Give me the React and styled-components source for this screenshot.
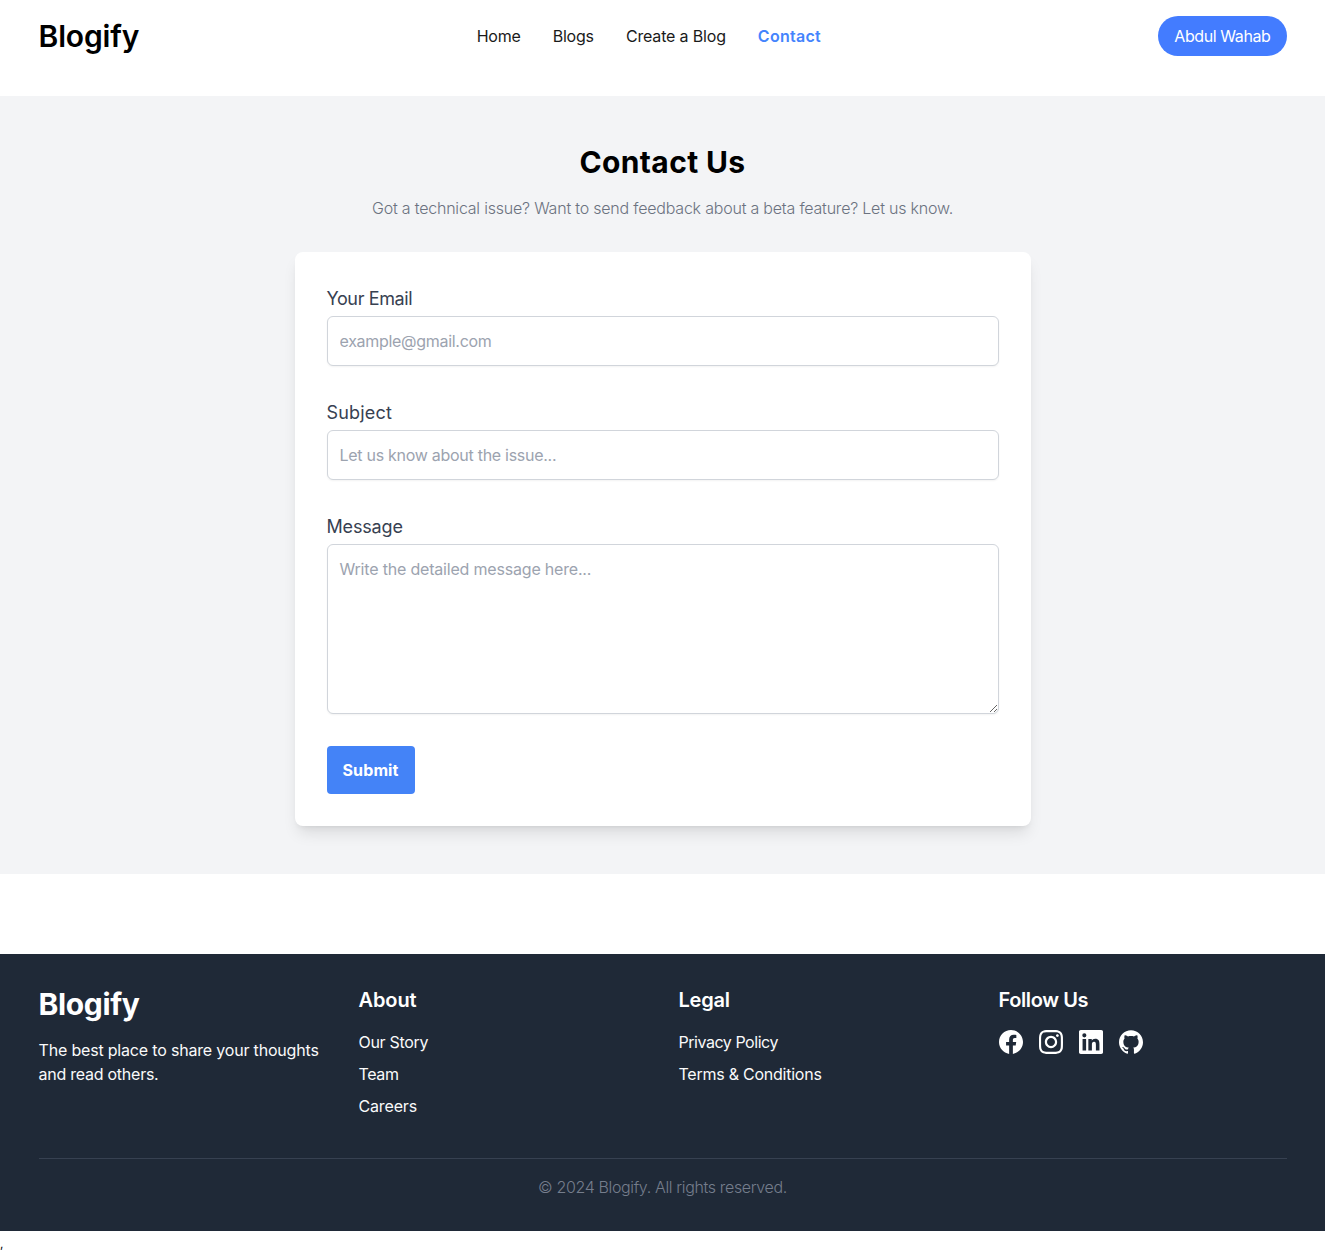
import React from "react";
import styled, { createGlobalStyle, css } from "styled-components";

const GlobalStyle = createGlobalStyle`
  *, *::before, *::after { box-sizing: border-box; }
  body {
    margin: 0;
    background: #fff;
    color: #000;
    font: 400 16px/24px Inter, "Liberation Sans", sans-serif;
  }
  h1, h2, h3, p, ul { margin: 0; padding: 0; }
  ul { list-style: none; }
  a { color: inherit; text-decoration: none; }
`;

const tracking = css`
  letter-spacing: ${({ $track = 0 }) => $track}px;
`;

const Container = styled.div`
  max-width: 1280px;
  margin: 0 auto;
  padding: 0 16px;
`;

const Header = styled.header`
  height: 96px;
  padding-top: 16px;
`;

const HeaderBar = styled(Container)`
  display: flex;
  align-items: center;
  justify-content: space-between;
`;

const Logo = styled.a`
  display: block;
  font-size: 30px;
  line-height: 36px;
  font-weight: ${({ $bold }) => ($bold ? 700 : 600)};
  white-space: nowrap;
  ${tracking}
`;

const Nav = styled.nav`
  display: flex;
  gap: 32px;
`;

const NavLink = styled.a`
  white-space: nowrap;
  color: ${({ $active }) => ($active ? "#4484fd" : "#1a1a1a")};
  font-weight: ${({ $active }) => ($active ? 600 : 400)};
  ${tracking}
`;

const UserButton = styled.button`
  height: 40px;
  padding: 8px 16px;
  border: 0;
  border-radius: 20px;
  background: #437cff;
  color: #fff;
  font: inherit;
  white-space: nowrap;
  ${tracking}
`;

const ContactSection = styled.section`
  padding: 48px 0;
  background: #f3f4f6;
`;

const Title = styled.h1`
  margin-bottom: 16px;
  text-align: center;
  font-size: 30px;
  line-height: 36px;
  font-weight: 700;
  ${tracking}
`;

const Subtitle = styled.p`
  margin-bottom: 32px;
  text-align: center;
  font-weight: 300;
  color: #6b7280;
  ${tracking}
`;

const FormCard = styled.form`
  display: flex;
  flex-direction: column;
  align-items: flex-start;
  gap: 32px;
  width: 736px;
  margin: 0 auto;
  padding: 32px;
  border-radius: 8px;
  background: #fff;
  box-shadow: 0 10px 15px -3px rgba(0, 0, 0, 0.1), 0 4px 6px -4px rgba(0, 0, 0, 0.1);
`;

const Field = styled.div`
  display: flex;
  flex-direction: column;
  gap: 4px;
  width: 100%;
`;

const Label = styled.label`
  padding-top: 2px;
  font-size: 18px;
  line-height: 26px;
  color: #374151;
  ${tracking}
`;

const control = css`
  display: block;
  width: 100%;
  padding: 12px;
  border: 1px solid #d1d5db;
  border-radius: 6px;
  background: #fff;
  box-shadow: 0 1px 2px rgba(0, 0, 0, 0.05);
  font: inherit;
  outline: none;
  ${tracking}
  &::placeholder { color: #9ca3af; opacity: 1; }
`;

const Input = styled.input`
  ${control}
  height: 50px;
`;

const TextArea = styled.textarea`
  ${control}
  height: 170px;
  resize: vertical;
`;

const SubmitButton = styled.button`
  height: 48px;
  padding: 12px 16px;
  border: 0;
  border-radius: 4px;
  background: #4483f7;
  color: #fff;
  font: inherit;
  font-weight: 700;
  ${tracking}
`;

const Footer = styled.footer`
  margin-top: 80px;
  padding: 32px 0;
  background: #1f2937;
  color: #fff;
`;

const FooterGrid = styled.div`
  display: grid;
  grid-template-columns: repeat(4, 1fr);
  gap: 32px;
`;

const Tagline = styled.p`
  margin-top: 16px;
  color: #fafafa;
`;

const TaglineRow = styled.span`
  display: block;
  white-space: nowrap;
  ${tracking}
`;

const FooterHeading = styled.h3`
  margin-bottom: 16px;
  font-size: 20px;
  line-height: 28px;
  font-weight: 600;
  ${tracking}
`;

const LinkList = styled.ul`
  display: flex;
  flex-direction: column;
  gap: 8px;
  padding-bottom: 8px;
`;

const FooterLink = styled.a`
  color: #fafafa;
  ${tracking}
`;

const Socials = styled.div`
  display: flex;
  gap: 16px;
`;

const SocialIcon = styled.svg`
  display: block;
  width: 24px;
  height: 24px;
  fill: #fff;
`;

const Copyright = styled.p`
  margin-top: 32px;
  padding-top: 16px;
  border-top: 1px solid #374151;
  text-align: center;
  font-weight: 300;
  color: #757d8c;
  ${tracking}
`;

const Trailing = styled.div`
  height: 24px;
  padding-top: 2px;
  font-size: 12px;
  line-height: 22px;
  padding-top: 2px;
`;

const navItems = [
  { text: "Home", track: -0.2 },
  { text: "Blogs", track: -0.2 },
  { text: "Create a Blog", track: -0.16 },
  { text: "Contact", track: 0.26, active: true },
];

const linkColumns = [
  {
    heading: "About",
    track: -0.1,
    links: [
      { text: "Our Story", track: -0.3 },
      { text: "Team", track: -0.35 },
      { text: "Careers", track: -0.15 },
    ],
  },
  {
    heading: "Legal",
    track: -0.2,
    links: [
      { text: "Privacy Policy", track: -0.46 },
      { text: "Terms & Conditions", track: -0.24 },
    ],
  },
];

const socials = [
  {
    name: "Facebook",
    d: "M24 12.073c0-6.627-5.373-12-12-12s-12 5.373-12 12c0 5.99 4.388 10.954 10.125 11.854v-8.385H7.078v-3.47h3.047V9.43c0-3.007 1.792-4.669 4.533-4.669 1.312 0 2.686.235 2.686.235v2.953H15.83c-1.491 0-1.956.925-1.956 1.874v2.25h3.328l-.532 3.47h-2.796v8.385C19.612 23.027 24 18.062 24 12.073z",
  },
  {
    name: "Instagram",
    d: "M12 0C8.74 0 8.333.015 7.053.072 5.775.132 4.905.333 4.14.63c-.789.306-1.459.717-2.126 1.384S.935 3.35.63 4.14C.333 4.905.131 5.775.072 7.053.012 8.333 0 8.74 0 12s.015 3.667.072 4.947c.06 1.277.261 2.148.558 2.913.306.788.717 1.459 1.384 2.126.667.666 1.336 1.079 2.126 1.384.766.296 1.636.499 2.913.558C8.333 23.988 8.74 24 12 24s3.667-.015 4.947-.072c1.277-.06 2.148-.262 2.913-.558.788-.306 1.459-.718 2.126-1.384.666-.667 1.079-1.335 1.384-2.126.296-.765.499-1.636.558-2.913.06-1.28.072-1.687.072-4.947s-.015-3.667-.072-4.947c-.06-1.277-.262-2.149-.558-2.913-.306-.789-.718-1.459-1.384-2.126C21.319 1.347 20.651.935 19.86.63c-.765-.297-1.636-.499-2.913-.558C15.667.012 15.26 0 12 0zm0 2.16c3.203 0 3.585.016 4.85.071 1.17.055 1.805.249 2.227.415.562.217.96.477 1.382.896.419.42.679.819.896 1.381.164.422.36 1.057.413 2.227.057 1.266.07 1.646.07 4.85s-.015 3.585-.074 4.85c-.061 1.17-.256 1.805-.421 2.227-.224.562-.479.96-.899 1.382-.419.419-.824.679-1.38.896-.42.164-1.065.36-2.235.413-1.274.057-1.649.07-4.859.07-3.211 0-3.586-.015-4.859-.074-1.171-.061-1.816-.256-2.236-.421-.569-.224-.96-.479-1.379-.899-.421-.419-.69-.824-.9-1.38-.165-.42-.359-1.065-.42-2.235-.045-1.26-.061-1.649-.061-4.844 0-3.196.016-3.586.061-4.861.061-1.17.255-1.814.42-2.234.21-.57.479-.96.9-1.381.419-.419.81-.689 1.379-.898.42-.166 1.051-.361 2.221-.421 1.275-.045 1.65-.06 4.859-.06l.045.03zm0 3.678c-3.405 0-6.162 2.76-6.162 6.162 0 3.405 2.76 6.162 6.162 6.162 3.405 0 6.162-2.76 6.162-6.162 0-3.405-2.76-6.162-6.162-6.162zM12 16c-2.21 0-4-1.79-4-4s1.79-4 4-4 4 1.79 4 4-1.79 4-4 4zm7.846-10.405c0 .795-.646 1.44-1.44 1.44-.795 0-1.44-.646-1.44-1.44 0-.794.646-1.439 1.44-1.439.793-.001 1.44.645 1.44 1.439z",
  },
  {
    name: "LinkedIn",
    d: "M22.23 0H1.77C.79 0 0 .774 0 1.729v20.542C0 23.227.79 24 1.77 24h20.46c.98 0 1.77-.773 1.77-1.729V1.729C24 .774 23.21 0 22.23 0zM7.12 20.452H3.558V9H7.12v11.452zM5.337 7.433a2.062 2.062 0 1 1 0-4.125 2.062 2.062 0 0 1 0 4.125zM20.447 20.452h-3.554v-5.569c0-1.328-.027-3.037-1.852-3.037-1.853 0-2.136 1.445-2.136 2.939v5.667H9.351V9h3.414v1.561h.046c.477-.9 1.637-1.85 3.37-1.85 3.601 0 4.267 2.37 4.267 5.455v6.286z",
  },
  {
    name: "GitHub",
    d: "M12 .297c-6.63 0-12 5.373-12 12 0 5.303 3.438 9.8 8.205 11.385.6.113.82-.258.82-.577 0-.285-.01-1.04-.015-2.04-3.338.724-4.042-1.61-4.042-1.61C4.422 18.07 3.633 17.7 3.633 17.7c-1.087-.744.084-.729.084-.729 1.205.084 1.838 1.236 1.838 1.236 1.07 1.835 2.809 1.305 3.495.998.108-.776.417-1.305.76-1.605-2.665-.3-5.466-1.332-5.466-5.93 0-1.31.465-2.38 1.235-3.22-.135-.303-.54-1.523.105-3.176 0 0 1.005-.322 3.3 1.23.96-.267 1.98-.399 3-.405 1.02.006 2.04.138 3 .405 2.28-1.552 3.285-1.23 3.285-1.23.645 1.653.24 2.873.12 3.176.765.84 1.23 1.91 1.23 3.22 0 4.61-2.805 5.625-5.475 5.92.42.36.81 1.096.81 2.22 0 1.606-.015 2.896-.015 3.286 0 .315.21.69.825.57C20.565 22.092 24 17.592 24 12.297c0-6.627-5.373-12-12-12",
  },
];

export default function App() {
  return (
    <>
      <GlobalStyle />
      <Header>
        <HeaderBar>
          <Logo href="#" $track={-0.15}>Blogify</Logo>
          <Nav>
            {navItems.map((item) => (
              <NavLink key={item.text} href="#" $active={item.active} $track={item.track}>
                {item.text}
              </NavLink>
            ))}
          </Nav>
          <UserButton $track={-0.4}>Abdul Wahab</UserButton>
        </HeaderBar>
      </Header>

      <ContactSection>
        <Title $track={0.38}>Contact Us</Title>
        <Subtitle $track={-0.21}>
          Got a technical issue? Want to send feedback about a beta feature? Let us know.
        </Subtitle>
        <FormCard onSubmit={(e) => e.preventDefault()}>
          <Field>
            <Label htmlFor="email" $track={-0.38}>Your Email</Label>
            <Input id="email" type="email" placeholder="example@gmail.com" $track={-0.3} />
          </Field>
          <Field>
            <Label htmlFor="subject" $track={0.2}>Subject</Label>
            <Input id="subject" placeholder="Let us know about the issue..." $track={-0.28} />
          </Field>
          <Field>
            <Label htmlFor="message" $track={-0.16}>Message</Label>
            <TextArea id="message" placeholder="Write the detailed message here..." $track={-0.19} />
          </Field>
          <SubmitButton type="submit" $track={0.12}>Submit</SubmitButton>
        </FormCard>
      </ContactSection>

      <Footer>
        <Container>
          <FooterGrid>
            <div>
              <Logo as="h2" $bold $track={-0.35}>Blogify</Logo>
              <Tagline>
                <TaglineRow $track={-0.185}>The best place to share your thoughts </TaglineRow>
                <TaglineRow $track={-0.25}>and read others.</TaglineRow>
              </Tagline>
            </div>
            {linkColumns.map((column) => (
              <div key={column.heading}>
                <FooterHeading $track={column.track}>{column.heading}</FooterHeading>
                <LinkList>
                  {column.links.map((link) => (
                    <li key={link.text}>
                      <FooterLink href="#" $track={link.track}>{link.text}</FooterLink>
                    </li>
                  ))}
                </LinkList>
              </div>
            ))}
            <div>
              <FooterHeading $track={-0.4}>Follow Us</FooterHeading>
              <Socials>
                {socials.map((icon) => (
                  <a key={icon.name} href="#" aria-label={icon.name}>
                    <SocialIcon viewBox="0 0 24 24" aria-hidden="true">
                      <path d={icon.d} />
                    </SocialIcon>
                  </a>
                ))}
              </Socials>
            </div>
          </FooterGrid>
          <Copyright $track={-0.36}>© 2024 Blogify. All rights reserved.</Copyright>
        </Container>
      </Footer>
      <Trailing>,</Trailing>
    </>
  );
}
